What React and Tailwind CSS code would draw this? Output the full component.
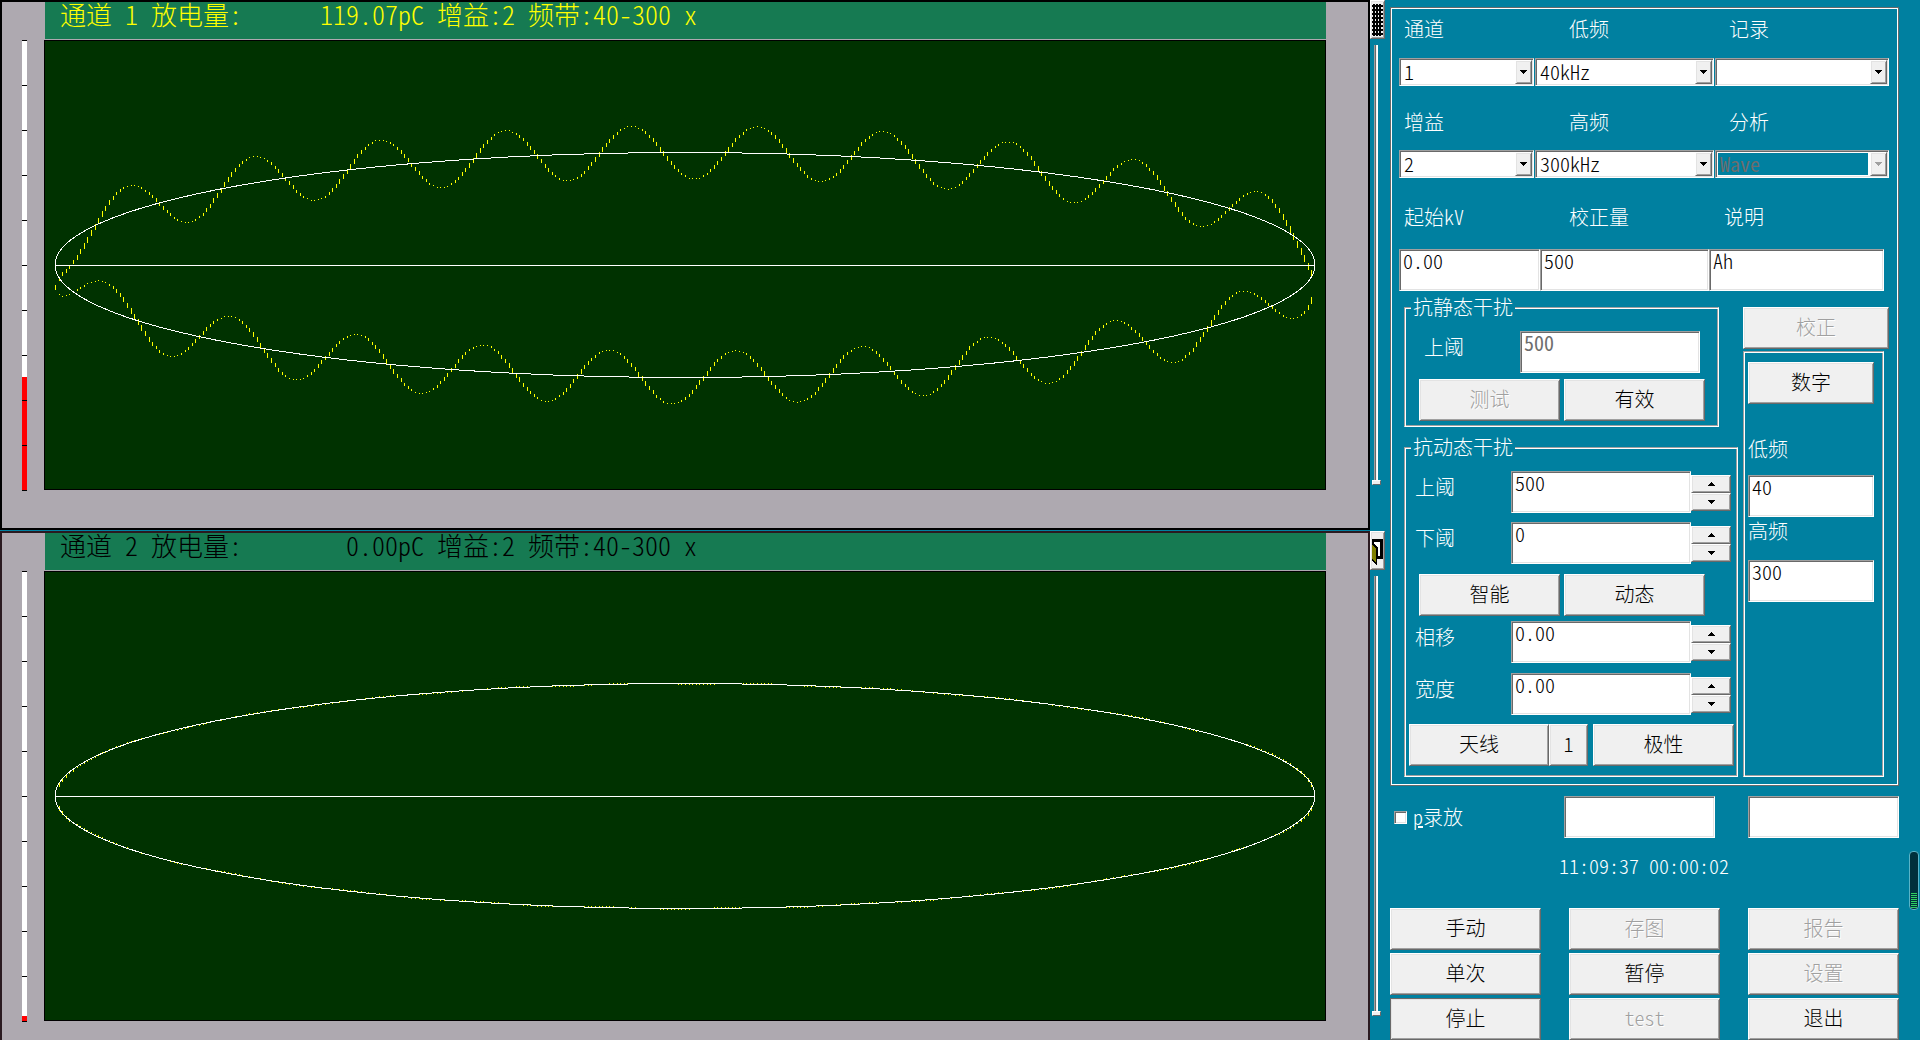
import React, { useState } from 'react';
import clsx from 'clsx';

const raised =
  'border border-t-white border-l-white border-r-[#696969] border-b-[#696969] bg-[#f0f0f0] shadow-[inset_1px_1px_0_#e3e3e3,inset_-1px_-1px_0_#a0a0a0]';
const sunken =
  'border border-t-[#a0a0a0] border-l-[#a0a0a0] border-r-white border-b-white bg-white shadow-[inset_1px_1px_0_#696969,inset_-1px_-1px_0_#e3e3e3]';
const etched =
  'border border-t-[#a0a0a0] border-l-[#a0a0a0] border-r-white border-b-white shadow-[inset_1px_1px_0_#fff,inset_-1px_-1px_0_#a0a0a0]';

// plot geometry, in pixels of the 1280 x 448 drawing area
const PLOT = { w: 1280, h: 448, cx: 640, cy: 224, rx: 630, ry: 112.5 };
const SAMPLES = 350;
const PERIOD = 126;

function wavePath(amplitude) {
  const step = (PLOT.rx * 2) / SAMPLES;
  const at = (dx, side) => {
    const arc = PLOT.ry * Math.sqrt(Math.max(0, 1 - (dx / PLOT.rx) ** 2));
    const phase = side < 0 ? dx + 54 : dx + 13;
    return PLOT.cy + side * (arc + amplitude * Math.cos((2 * Math.PI * phase) / PERIOD));
  };
  let d = '';
  [-1, 1].forEach((side) => {
    for (let i = 0; i < SAMPLES; i += 1) {
      const dx = -PLOT.rx + i * step;
      const y = at(dx, side);
      const rise = Math.min(Math.abs(at(dx + step, side) - y), Math.abs(y - at(dx - step, side)));
      const len = Math.max(1, Math.round(rise));
      const x = Math.round(PLOT.cx + dx) + 0.5;
      d += `M${x} ${Math.round(y - len / 2)}v${len}`;
    }
  });
  return d;
}

function Plot({ amplitude }) {
  return (
    <div className="min-w-0 flex-1 border border-black bg-[#003200]">
      <svg
        viewBox={`0 0 ${PLOT.w} ${PLOT.h}`}
        preserveAspectRatio="none"
        shapeRendering="crispEdges"
        className="block h-[448px] w-full"
        fill="none"
      >
        <path d={wavePath(amplitude)} stroke="#ffff00" />
        <ellipse cx={PLOT.cx} cy={PLOT.cy} rx={PLOT.rx} ry={PLOT.ry} stroke="#fff" />
        <path d="M10 224.5H1270" stroke="#fff" />
      </svg>
    </div>
  );
}

const TICKS = Array.from({ length: 11 }, (_, i) => i);

function LevelScale({ level }) {
  return (
    <div className="relative ml-5 h-[450px] w-[5px] bg-white">
      <div className="absolute inset-x-0 bottom-0 bg-[#ff0000]" style={{ height: level }} />
      {TICKS.map((i) => (
        <div key={i} className="absolute inset-x-0 h-px bg-black" style={{ top: i * 45 }} />
      ))}
    </div>
  );
}

function ChannelPanel({ title, titleClass, frameClass, amplitude, level }) {
  return (
    <section className={clsx('bg-[#aea9b0]', frameClass)}>
      <h2
        className={clsx(
          'ml-[43px] mr-[42px] h-[37px] whitespace-pre bg-[#167a52] pl-[15px] text-[26px] leading-6',
          titleClass
        )}
      >
        {title}
      </h2>
      <div className="mt-px flex pr-[42px]">
        <LevelScale level={level} />
        <div className="w-[17px]" />
        <Plot amplitude={amplitude} />
      </div>
    </section>
  );
}

function GridIcon() {
  return (
    <svg width="11" height="32" viewBox="0 0 11 32" shapeRendering="crispEdges" fill="#000">
      {[0, 1, 2, 3, 4, 5, 6, 7].map((r) => (
        <rect key={r} x="0" y={1 + r * 4} width="11" height="2" />
      ))}
      {[1, 4, 7].map((x) => (
        <rect key={x} x={x} y="0" width="2" height="32" />
      ))}
    </svg>
  );
}

function DoorIcon() {
  return (
    <svg width="11" height="27" viewBox="0 0 11 27" shapeRendering="crispEdges">
      <path d="M0 0h11v20H5v7L0 21z" fill="#000" />
      <path d="M2 3h6v14H6V9L2 4z" fill="#fff" />
      <path d="M0 5l4 5v14l-4-4z" fill="#808000" />
    </svg>
  );
}

function GainSlider({ label }) {
  return (
    <input
      type="range"
      aria-label={label}
      defaultValue={0}
      className="ml-[2px] block h-[440px] w-[9px] appearance-none bg-[linear-gradient(90deg,transparent_2px,#a0a0a0_2px,#a0a0a0_3px,#696969_3px,#696969_4px,#e3e3e3_4px,#fff_5px,#fff_6px,transparent_6px)] [direction:rtl] [writing-mode:vertical-lr] [&::-webkit-slider-thumb]:h-[5px] [&::-webkit-slider-thumb]:w-[9px] [&::-webkit-slider-thumb]:appearance-none [&::-webkit-slider-thumb]:border [&::-webkit-slider-thumb]:border-t-white [&::-webkit-slider-thumb]:border-r-[#696969] [&::-webkit-slider-thumb]:border-b-[#696969] [&::-webkit-slider-thumb]:border-l-white [&::-webkit-slider-thumb]:bg-[#f0f0f0]"
    />
  );
}

function PushButton({ children, disabled, isDefault, className }) {
  return (
    <button
      type="button"
      disabled={disabled}
      className={clsx(
        'h-[42px] shrink-0 pb-[2px] text-xl leading-5',
        raised,
        disabled ? 'text-[#a0a0a0] [text-shadow:1px_1px_0_#fff]' : 'text-black',
        isDefault && 'outline-1 -outline-offset-1 outline-[#696969]',
        className
      )}
    >
      {children}
    </button>
  );
}

function TextBox({ id, value, label, disabled, className }) {
  return (
    <input
      id={id}
      type="text"
      aria-label={label}
      defaultValue={value}
      disabled={disabled}
      className={clsx(
        'h-[42px] min-w-0 shrink-0 pb-5 pl-[3px] text-xl leading-5',
        sunken,
        disabled ? 'font-normal text-[#6d6d6d]' : 'text-black',
        className
      )}
    />
  );
}

function DropDown({ id, options, disabled }) {
  return (
    <div className={clsx('relative h-7 p-[2px]', sunken)}>
      <select
        id={id}
        disabled={disabled}
        className={clsx(
          'block h-[22px] w-[calc(100%-18px)] appearance-none pl-[2px] text-xl leading-5 opacity-100',
          disabled ? 'bg-[#0080a0] font-normal text-[#6d6d6d]' : 'text-black'
        )}
      >
        {options.map((option) => (
          <option key={option}>{option}</option>
        ))}
      </select>
      <span className={clsx('pointer-events-none absolute inset-y-px right-px flex w-[17px] items-center justify-center', raised)}>
        <svg width="7" height="4" viewBox="0 0 7 4" shapeRendering="crispEdges">
          <path d="M0 0h7v1H6v1H5v1H4v1H3V3H2V2H1V1H0z" fill={disabled ? '#a0a0a0' : '#000'} />
        </svg>
      </span>
    </div>
  );
}

function Field({ id, label, labelClass, children }) {
  return (
    <div className="flex min-w-0 flex-col">
      <label htmlFor={id} className={clsx('leading-5', labelClass)}>
        {label}
      </label>
      {children}
    </div>
  );
}

function SpinField({ id, label, value }) {
  const [text, setText] = useState(value);
  const digits = (value.split('.')[1] || '').length;
  const bump = (delta) => setText((current) => (Number(current) + delta).toFixed(digits));

  return (
    <div className="flex pl-[10px]">
      <label htmlFor={id} className="w-24 pt-[6px] leading-5">
        {label}
      </label>
      <input
        id={id}
        type="text"
        value={text}
        onChange={(event) => setText(event.target.value)}
        className={clsx('h-[42px] w-[180px] pb-5 pl-[3px] text-xl leading-5 text-black', sunken)}
      />
      <div className="mt-1 flex w-10 flex-col">
        <button type="button" aria-label={`${label} +`} onClick={() => bump(1)} className={clsx('flex h-[18px] items-center justify-center', raised)}>
          <svg width="7" height="4" viewBox="0 0 7 4" shapeRendering="crispEdges">
            <path d="M0 4h7V3H6V2H5V1H4V0H3v1H2v1H1v1H0z" fill="#000" />
          </svg>
        </button>
        <button type="button" aria-label={`${label} -`} onClick={() => bump(-1)} className={clsx('flex h-[18px] items-center justify-center', raised)}>
          <svg width="7" height="4" viewBox="0 0 7 4" shapeRendering="crispEdges">
            <path d="M0 0h7v1H6v1H5v1H4v1H3V3H2V2H1V1H0z" fill="#000" />
          </svg>
        </button>
      </div>
    </div>
  );
}

const commands = [
  { name: '手动' },
  { name: '存图', disabled: true },
  { name: '报告', disabled: true },
  { name: '单次' },
  { name: '暂停' },
  { name: '设置', disabled: true },
  { name: '停止', isDefault: true },
  { name: 'test', disabled: true },
  { name: '退出' }
];

function SettingsPanel() {
  return (
    <div className="mt-[7px] w-[509px] border border-[#696969] pb-2 pl-2 pt-[11px] shadow-[inset_0_0_0_1px_#fff]">
      <div className="grid grid-cols-[135px_179px_174px] gap-x-px">
        <Field id="channel" label="通道" labelClass="mb-[19px] pl-[5px]">
          <DropDown id="channel" options={['1', '2']} />
        </Field>
        <Field id="low" label="低频" labelClass="mb-[19px] pl-[34px]">
          <DropDown id="low" options={['40kHz']} />
        </Field>
        <Field id="record" label="记录" labelClass="mb-[19px] pl-[14px]">
          <DropDown id="record" options={['']} />
        </Field>
      </div>
      <div className="mt-[26px] grid grid-cols-[135px_179px_174px] gap-x-px">
        <Field id="gain" label="增益" labelClass="mb-[18px] pl-[5px]">
          <DropDown id="gain" options={['2']} />
        </Field>
        <Field id="high" label="高频" labelClass="mb-[18px] pl-[34px]">
          <DropDown id="high" options={['300kHz']} />
        </Field>
        <Field id="analysis" label="分析" labelClass="mb-[18px] pl-[14px]">
          <DropDown id="analysis" options={['Wave']} disabled />
        </Field>
      </div>
      <div className="mt-[29px] grid grid-cols-[141px_169px_175px]">
        <Field id="start-kv" label="起始kV" labelClass="mb-[22px] pl-[5px]">
          <TextBox id="start-kv" value="0.00" />
        </Field>
        <Field id="calibration" label="校正量" labelClass="mb-[22px] pl-[29px]">
          <TextBox id="calibration" value="500" />
        </Field>
        <Field id="note" label="说明" labelClass="mb-[22px] pl-[15px]">
          <TextBox id="note" value="Ah" />
        </Field>
      </div>

      <div className="mt-[6px] flex gap-[5px] pl-[5px]">
        <div className="w-[334px]">
          <fieldset className={clsx('w-[315px] pb-[5px]', etched)}>
            <legend className="ml-[6px] bg-[#0080a0] px-[2px] leading-5">抗静态干扰</legend>
            <div className="mt-[14px] flex pl-[19px]">
              <label htmlFor="static-high" className="w-24 pt-[6px] leading-5">
                上阈
              </label>
              <TextBox id="static-high" value="500" disabled className="w-[180px]" />
            </div>
            <div className="mt-[6px] flex gap-1 pl-[14px]">
              <PushButton disabled className="w-[141px]">测试</PushButton>
              <PushButton className="w-[141px]">有效</PushButton>
            </div>
          </fieldset>

          <fieldset className={clsx('mt-[10px] pb-[10px]', etched)}>
            <legend className="ml-[6px] bg-[#0080a0] px-[2px] leading-5">抗动态干扰</legend>
            <div className="mt-[14px] flex flex-col gap-[9px]">
              <SpinField id="dyn-high" label="上阈" value="500" />
              <SpinField id="dyn-low" label="下阈" value="0" />
            </div>
            <div className="mt-[10px] flex gap-1 pl-[14px]">
              <PushButton className="w-[141px]">智能</PushButton>
              <PushButton className="w-[141px]">动态</PushButton>
            </div>
            <div className="mt-[5px] flex flex-col gap-[10px]">
              <SpinField id="phase" label="相移" value="0.00" />
              <SpinField id="width" label="宽度" value="0.00" />
            </div>
            <div className="mt-[9px] flex pl-1">
              <PushButton className="w-[140px]">天线</PushButton>
              <PushButton className="w-[39px]">1</PushButton>
              <PushButton className="ml-[5px] w-[141px]">极性</PushButton>
            </div>
          </fieldset>
        </div>

        <div className="flex w-[146px] flex-col pt-[10px]">
          <PushButton disabled>校正</PushButton>
          <div className={clsx('mt-[2px] flex w-[141px] flex-1 flex-col px-1 pt-[10px]', etched)}>
            <PushButton className="w-[126px]">数字</PushButton>
            <label htmlFor="filter-low" className="mt-[35px] leading-5">低频</label>
            <TextBox id="filter-low" value="40" className="mt-4 w-[126px]" />
            <label htmlFor="filter-high" className="mt-1 leading-5">高频</label>
            <TextBox id="filter-high" value="300" className="mt-[19px] w-[126px]" />
          </div>
        </div>
      </div>
    </div>
  );
}

export default function App() {
  return (
    <main className="flex min-h-screen bg-[#0080a0] font-['Noto_Sans_CJK_SC',sans-serif] font-light text-white [font-feature-settings:'hwid']">
      <div className="flex min-w-0 flex-1 flex-col gap-px">
        <ChannelPanel
          title="通道 1 放电量:      119.07pC 增益:2 频带:40-300 x"
          titleClass="text-[#ffff00]"
          frameClass="border-2 border-black pb-[38px]"
          amplitude={26.5}
          level={113}
        />
        <ChannelPanel
          title="通道 2 放电量:        0.00pC 增益:2 频带:40-300 x"
          titleClass="text-black"
          frameClass="flex-1 border-x-2 border-t-2 border-[#2a1a20]"
          amplitude={0.8}
          level={5}
        />
      </div>

      <div className="w-5 shrink-0">
        <button type="button" aria-label="网格" className={clsx('flex h-[39px] w-[15px] items-center justify-center overflow-hidden', raised)}>
          <GridIcon />
        </button>
        <div className="mt-[6px]">
          <GainSlider label="通道 1 增益" />
        </div>
        <button type="button" aria-label="退出" className={clsx('mt-[46px] flex h-[39px] w-[15px] items-center justify-center overflow-hidden pt-1', raised)}>
          <DoorIcon />
        </button>
        <div className="mt-[6px]">
          <GainSlider label="通道 2 增益" />
        </div>
      </div>

      <aside className="relative w-[530px] shrink-0 text-xl leading-5">
        <SettingsPanel />

        <div className="mt-[10px] flex">
          <label className="flex w-[174px] items-center gap-[6px] pl-1">
            <input type="checkbox" className={clsx('size-[13px] appearance-none', sunken)} />
            <span className="leading-5"><span className="underline">p</span>录放</span>
          </label>
          <TextBox label="记录一" value="" className="w-[151px]" />
          <TextBox label="记录二" value="" className="ml-[33px] w-[151px]" />
        </div>

        <p className="mt-[18px] pl-[169px] leading-5">11:09:37 00:00:02</p>

        <div className="mt-8 grid grid-cols-[151px_151px_151px] gap-x-7 gap-y-[3px]">
          {commands.map((command) => (
            <PushButton key={command.name} disabled={command.disabled} isDefault={command.isDefault}>
              {command.name}
            </PushButton>
          ))}
        </div>

        {/* level gauge floating over the window edge */}
        <div className="absolute right-px top-[851px] flex h-[59px] w-[10px] flex-col justify-end gap-px rounded-[4px] border border-[#5ab4c8] bg-[#00303c] p-px">
          {[0, 1, 2, 3, 4, 5, 6, 7].map((i) => (
            <div key={i} className="h-px bg-[#30d060]" />
          ))}
        </div>
      </aside>
    </main>
  );
}
